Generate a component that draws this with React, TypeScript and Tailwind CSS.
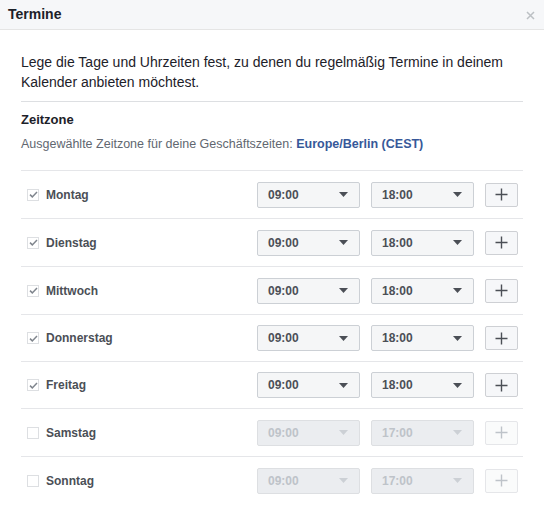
import React from "react";

type Day = { name: string; active: boolean; from: string; to: string };

const days: Day[] = [
  { name: "Montag", active: true, from: "09:00", to: "18:00" },
  { name: "Dienstag", active: true, from: "09:00", to: "18:00" },
  { name: "Mittwoch", active: true, from: "09:00", to: "18:00" },
  { name: "Donnerstag", active: true, from: "09:00", to: "18:00" },
  { name: "Freitag", active: true, from: "09:00", to: "18:00" },
  { name: "Samstag", active: false, from: "09:00", to: "17:00" },
  { name: "Sonntag", active: false, from: "09:00", to: "17:00" },
];

const Caret = ({ disabled }: { disabled: boolean }) => (
  <svg width="9" height="5" viewBox="0 0 9 5" className={disabled ? "text-[#ccd0d5]" : "text-[#4b4f56]"}>
    <path d="M0 0h9L4.5 5z" fill="currentColor" />
  </svg>
);

const TimeSelect = ({ value, disabled }: { value: string; disabled: boolean }) => (
  <div
    className={`w-[103px] h-[26px] flex items-center justify-between pl-[10px] pr-[11px] border rounded-[2px] text-[12px] font-bold ${
      disabled
        ? "bg-[#ebedf0] border-[#dddfe2] text-[#bec3c9]"
        : "bg-[#f5f6f7] border-[#ccd0d5] text-[#4b4f56]"
    }`}
  >
    <span>{value}</span>
    <Caret disabled={disabled} />
  </div>
);

// the reference rows are not all the same height (48/48/48/47/47/48)
const DayRow = ({ day, tall }: { day: Day; tall: boolean }) => (
  <div className={`${tall ? "h-[48px]" : "h-[47px]"} border-t border-[#e5e6e9] flex items-center`}>
    <div className="flex items-center w-[236px] pl-[6px]">
      <div className="w-[12px] h-[12px] border border-[#dddfe2] flex items-center justify-center bg-white">
        {day.active && (
          <svg width="9" height="7" viewBox="0 0 9 7">
            <path d="M1 3.6l2.3 2.3L8 1.1" fill="none" stroke="#7f858d" strokeWidth="1.5" />
          </svg>
        )}
      </div>
      <span className="ml-[7px] text-[12px] font-bold text-[#4b4f56]">{day.name}</span>
    </div>
    <TimeSelect value={day.from} disabled={!day.active} />
    <div className="w-[11px]" />
    <TimeSelect value={day.to} disabled={!day.active} />
    <div className="w-[11px]" />
    <div
      className={`w-[33px] h-[24px] border rounded-[2px] flex items-center justify-center ${
        day.active ? "bg-[#f6f7f9] border-[#ced0d4]" : "bg-[#fafbfb] border-[#e5e6e9]"
      }`}
    >
      <svg width="13" height="13" viewBox="0 0 13 13">
        <path
          d="M6.5 0.5v12M0.5 6.5h12"
          stroke={day.active ? "#4b4f56" : "#bec3c9"}
          strokeWidth="1.4"
        />
      </svg>
    </div>
  </div>
);

export default function App() {
  return (
    <div className="w-[544px] h-[521px] bg-white overflow-hidden font-['Liberation_Sans',Arial,sans-serif]">
      <div className="h-[30px] bg-[#f6f7f9] border-b border-[#e5e5e5] flex items-center justify-between pl-[8px] pr-[9px]">
        <span className="text-[14px] font-bold text-[#1d2129]">Termine</span>
        <svg width="9" height="9" viewBox="0 0 9 9" className="mt-[2px]">
          <path d="M1 1l7 7M8 1L1 8" stroke="#bcc0c4" strokeWidth="1.5" />
        </svg>
      </div>
      <div className="px-[21px]">
        <p className="pt-[22px] text-[14px] leading-[20px] text-[#1d2129]">
          Lege die Tage und Uhrzeiten fest, zu denen du regelmäßig Termine in deinem Kalender anbieten möchtest.
        </p>
        <div className="mt-[9px] border-t border-[#dddfe2]" />
        <div className="pt-[10px] text-[13px] leading-[16px] font-bold text-[#1d2129]">Zeitzone</div>
        <div className="mt-[8px] text-[12.5px] leading-[16px] text-[#616770]">
          Ausgewählte Zeitzone für deine Geschäftszeiten:{" "}
          <span className="font-bold text-[#365899]">Europe/Berlin (CEST)</span>
        </div>
        <div className="mt-[18px]">
          {days.map((d, i) => (
            <DayRow key={d.name} day={d} tall={i !== 3 && i !== 4} />
          ))}
        </div>
      </div>
    </div>
  );
}
